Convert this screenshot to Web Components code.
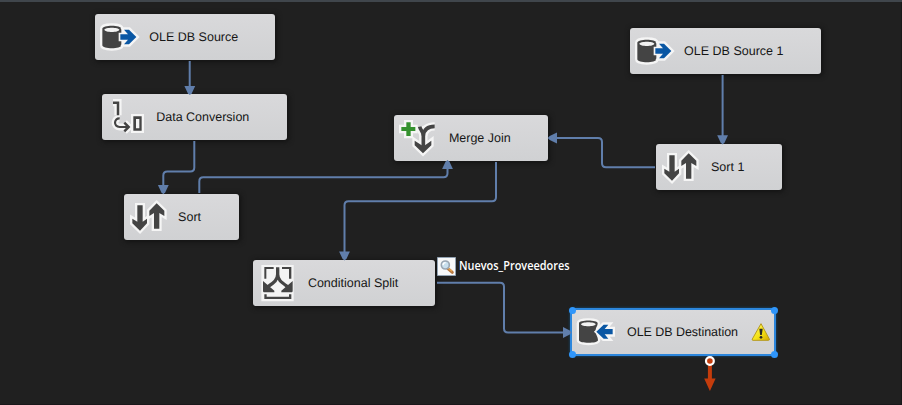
<!DOCTYPE html>
<html lang="es">
<head>
<meta charset="utf-8">
<title>Data Flow</title>
<style>
  html, body { margin: 0; height: 100%; background: #202020; overflow: hidden; }
</style>
</head>
<body>
<flow-canvas>
  <flow-node icon="source" style="--x:94.7px;--y:14.2px;--w:180.5px">OLE DB Source</flow-node>
  <flow-node icon="convert" style="--x:101.6px;--y:94.4px;--w:185px">Data Conversion</flow-node>
  <flow-node icon="sort" style="--x:123.5px;--y:194.2px;--w:115.2px">Sort</flow-node>
  <flow-node icon="merge" style="--x:394.3px;--y:114.6px;--w:153.4px">Merge Join</flow-node>
  <flow-node icon="source" style="--x:629.5px;--y:28.2px;--w:191px">OLE DB Source 1</flow-node>
  <flow-node icon="sort" style="--x:656.4px;--y:144.2px;--w:125.8px">Sort 1</flow-node>
  <flow-node icon="split" style="--x:253.3px;--y:259.6px;--w:182.2px">Conditional Split</flow-node>
  <flow-node icon="dest" selected style="--x:572.4px;--y:310.4px;--w:202px">OLE DB Destination</flow-node>
  <flow-links></flow-links>
  <path-label>Nuevos_Proveedores</path-label>
  <error-output></error-output>
</flow-canvas>
<script>
class FlowCanvas extends HTMLElement {
  constructor() {
    super();
    this.attachShadow({ mode: 'open' }).innerHTML = `
      <style>
        :host { display: block; position: relative; box-sizing: border-box; width: 902px; height: 405px;
          overflow: hidden; background: #202020; border-top: 2px solid #40464c; }
        .plane { position: absolute; left: 0; top: -2px; width: 902px; height: 405px; }
        .edge { position: absolute; inset: 0; border-right: 1px solid #191919; border-bottom: 1px solid #1a171a; }
      </style>
      <div class="edge"></div><div class="plane"><slot></slot></div>`;
  }
}

class FlowLinks extends HTMLElement {
  constructor() {
    super();
    this.attachShadow({ mode: 'open' }).innerHTML = `
      <style>
        :host { display: block; position: absolute; inset: 0; }
        svg { display: block; }
        .l { fill: none; stroke: #607eab; stroke-width: 2; }
        .a { fill: #607eab; }
      </style>
      <svg width="902" height="405">
        <g class="l">
          <path d="M189.7 61V88"/>
          <path d="M194.3 141V167.5Q194.3 171.5 190.3 171.5H167.3Q163.3 171.5 163.3 175.5V188"/>
          <path d="M199.3 193V181.3Q199.3 177.3 203.3 177.3H443.5Q447.5 177.3 447.5 173.3V166"/>
          <path d="M496 162V197.3Q496 201.3 492 201.3H348.5Q344.5 201.3 344.5 205.3V254"/>
          <path d="M722.6 75V138"/>
          <path d="M655 167.3H606Q602 167.3 602 163.3V142Q602 138 598 138H554"/>
          <path d="M437 282.7H500Q504 282.7 504 286.7V328.5Q504 332.5 508 332.5H566"/>
        </g>
        <g class="a">
          <path d="M184.4 86h10.8l-3.4 7.3-2 1.7-2-1.7z"/>
          <path d="M157.9 185h10.8l-3.4 7.3-2 1.9-2-1.9z"/>
          <path d="M442.1 169h10.8l-3.4-7.3-2-1.7-2 1.7z"/>
          <path d="M339.1 251.5h10.8l-3.4 7.2-2 1.8-2-1.8z"/>
          <path d="M717.2 135.3h10.8l-3.4 7.3-2 1.9-2-1.9z"/>
          <path d="M557 132.6v10.8l-7.3-3.4-1.9-2 1.9-2z"/>
          <path d="M563 327.1v10.8l6.8-3.4 1.8-2-1.8-2z"/>
        </g>
      </svg>`;
  }
}

// Icon art: 'fill' entries are solid shapes, 'line' entries are stroked; every shape gets a light outline beneath.
const K = '#444444', B = '#0a57a4', G = '#35912f';
const fill = (d, c = K) => ({ d, c });
const line = (d, w, c = K) => ({ d, w, c });
const ICONS = {
  source: [fill('M22 44C22 32 79 32 79 44V94C79 106 22 106 22 94Z'),
           { d: 'M28 47C30 39 71 39 73 47C71 56 30 56 28 47Z', c: '#f2f2f2', bare: 1 },
           fill('M76 61H99L87 47H102L124 69L102 91H87L99 77H76Z', B)],
  dest: [fill('M21 43C21 32 77 32 77 43C77 52 71 54 71 66C71 78 78 82 78 94C78 104 21 104 21 94Z'),
         { d: 'M27 46C29 38 69 38 71 46C69 54 29 54 27 46Z', c: '#f2f2f2', bare: 1 },
         fill('M122 60H98L109 47H95L73 68L95 89H109L98 76H122Z', B)],
  convert: [line('M33 26H48V64', 7.5), fill('M94 67H119V110H94ZM102 75V103H112V75Z'),
            line('M53 73C36 72 33 98 53 99H78', 6.5), line('M67 86L80 99L67 112', 7.5)],
  sort: [fill('M40 34H56V83L69 74V88L48 110L25 88V74L40 83Z'),
         fill('M90 104H106V57L121 66V50L98 28L76 50V66L90 57Z')],
  merge: [line('M77 35C80 48 88 49 88 62V104', 11), line('M122 34C103 34 90 43 88 62', 11),
          fill('M62 77L83 91H93L112 77V91L87 115L62 91Z'),
          fill('M37 22H50V36H64V48H50V63H37V48H22V36H37Z', G)],
  split: [{ d: 'M25 15H122V124H25Z', c: '#f4f4f4', bare: 1 },
          fill('M34 21H62V27H40V56H34ZM87 21H115V56H108V27H87ZM34 103H41V110H108V103H115V117H34Z'),
          line('M74 22V43C74 61 62 68 42 82M74 43C74 61 87 68 107 82', 10),
          fill('M30 63L64 92V97H33Q30 97 30 92ZM119 63L85 92V97H116Q119 97 119 92Z')]
};
function iconSvg(name) {
  const halo = '#f5f5f5';
  const under = ICONS[name].filter(s => !s.bare).map(s =>
    `<path d="${s.d}" fill="${s.w ? 'none' : halo}" stroke="${halo}" stroke-width="${(s.w || 0) + 14}"/>`).join('');
  const over = ICONS[name].map(s => s.w
    ? `<path d="${s.d}" fill="none" stroke="${s.c}" stroke-width="${s.w}"/>`
    : `<path d="${s.d}" fill="${s.c}" fill-rule="evenodd"${s.c === B || s.c === G ? ` stroke="${halo}" stroke-width="10" paint-order="stroke"` : ''}/>`).join('');
  const art = name === 'split' ? over : under + over;
  return `<svg width="46" height="46" viewBox="0 0 138 138" stroke-linejoin="miter">${art}</svg>`;
}

class FlowNode extends HTMLElement {
  connectedCallback() {
    if (this.shadowRoot) return;
    const selected = this.hasAttribute('selected');
    this.attachShadow({ mode: 'open' }).innerHTML = `
      <style>
        :host { position: absolute; left: var(--x); top: var(--y); width: var(--w); height: 46px; box-sizing: border-box;
          display: flex; align-items: center; border-radius: 3px;
          background: linear-gradient(#d9d9db, #d0d1d3); box-shadow: 1px 1px 5px 1px #131313;
          font: 12.5px "Liberation Sans", Arial, sans-serif; color: #161616; text-rendering: geometricPrecision; }
        :host([selected]) { height: 44px; border-radius: 1px; box-shadow: 0 0 0 2px #2c86dc, 0 0 3px 2px #14517f; }
        svg { flex: none; display: block; }
        .t { padding-left: 8.6px; white-space: nowrap; }
        :host([selected]) .t { letter-spacing: -.05px; }
        .warn { margin-left: 13px; }
        i { position: absolute; width: 7.6px; height: 7.6px; border-radius: 50%; background: #2f96fb; }
        i:nth-of-type(odd) { left: -3.5px; } i:nth-of-type(even) { right: -3.8px; }
        i:nth-of-type(-n+2) { top: -3.8px; } i:nth-of-type(n+3) { bottom: -3.9px; }
      </style>
      ${iconSvg(this.getAttribute('icon'))}<span class="t"><slot></slot></span>
      ${selected ? `<svg class="warn" width="20" height="20" viewBox="0 0 60 60">
        <defs><linearGradient id="w" x2="1" y2="1"><stop stop-color="#fff76a"/><stop offset=".55" stop-color="#f5e316"/><stop offset="1" stop-color="#d3a800"/></linearGradient></defs>
        <path d="M30 5L55 51Q56 55 52 55H6Q2 55 4 51Z" fill="url(#w)" stroke="#b69b20" stroke-width="3" stroke-linejoin="round"/>
        <path d="M25 20H35L32.5 39H27.5Z" fill="#282828"/><circle cx="30" cy="46" r="4" fill="#282828"/>
      </svg><i></i><i></i><i></i><i></i>` : ''}`;
  }
}

class PathLabel extends HTMLElement {
  constructor() {
    super();
    this.attachShadow({ mode: 'open' }).innerHTML = `
      <style>
        :host { position: absolute; left: 437px; top: 257px; display: flex; align-items: center; height: 19px; }
        .t { font: 600 12px "Open Sans", "Noto Sans", sans-serif; color: #fff; white-space: nowrap;
          margin: -3px 0 0 3px; transform-origin: 0 50%; transform: scaleX(.91); }
        svg { display: block; flex: none; }
      </style>
      <svg width="19" height="19" viewBox="0 0 57 57">
        <path d="M1.5 1.5H55.5V55.5H1.5Z" fill="#f7f8f9" stroke="#92a2b2" stroke-width="3"/>
        <path d="M32 34L46 46" stroke="#b77840" stroke-width="9" stroke-linecap="round"/>
        <path d="M33 33L45 43" stroke="#e7a64e" stroke-width="4"/>
        <circle cx="25" cy="24" r="12" fill="#c9e0ee" stroke="#9aa6b2" stroke-width="5"/>
        <path d="M18 25Q18 17 26 17" fill="none" stroke="#fff" stroke-width="4"/>
      </svg><span class="t"><slot></slot></span>`;
  }
}

class ErrorOutput extends HTMLElement {
  constructor() {
    super();
    this.attachShadow({ mode: 'open' }).innerHTML = `
      <style>:host { position: absolute; left: 702px; top: 354px; display: block; } svg { display: block; }</style>
      <svg width="16" height="38">
        <path d="M7.9 7V26" stroke="#c43c0c" stroke-width="4"/>
        <path d="M2.2 24.5H13.6L7.9 37Z" fill="#c43c0c"/>
        <circle cx="7.9" cy="7" r="3.9" fill="#c43c0c" stroke="#fff" stroke-width="2.2"/>
      </svg>`;
  }
}
customElements.define('flow-canvas', FlowCanvas);
customElements.define('flow-links', FlowLinks);
customElements.define('flow-node', FlowNode);
customElements.define('path-label', PathLabel);
customElements.define('error-output', ErrorOutput);
</script>
</body>
</html>
